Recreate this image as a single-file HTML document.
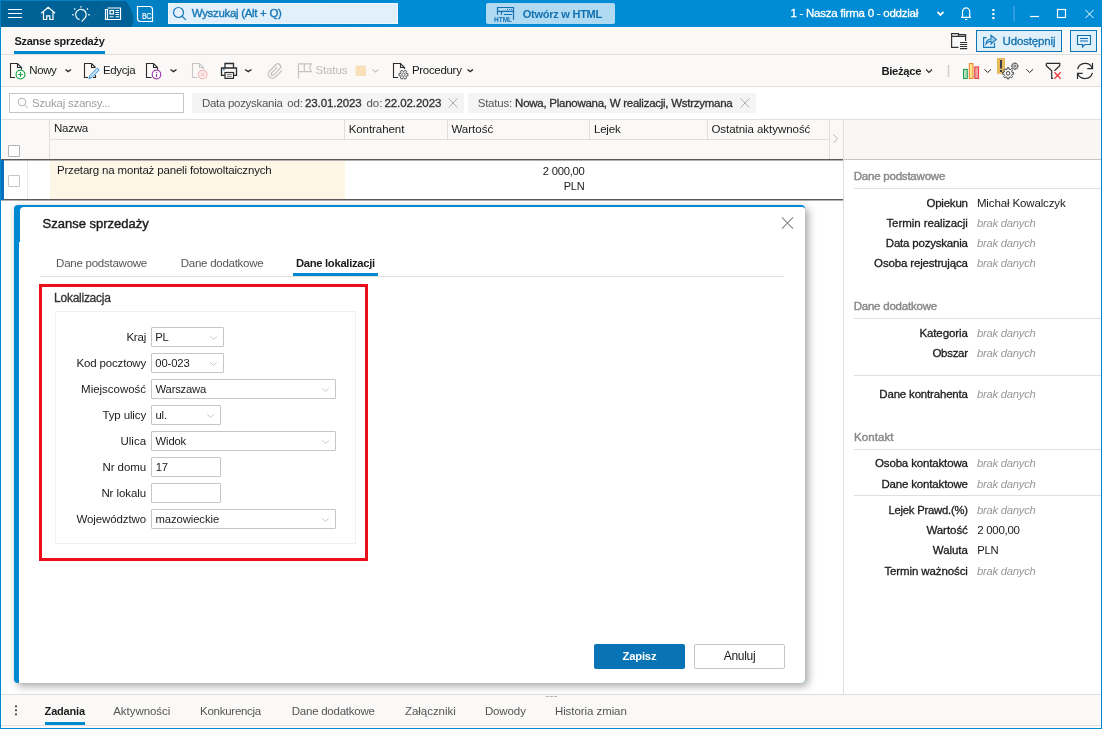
<!DOCTYPE html>
<html lang="pl">
<head>
<meta charset="utf-8">
<title>Szanse sprzedaży</title>
<style>
*{box-sizing:border-box;margin:0;padding:0}
html,body{width:1102px;height:729px;overflow:hidden;background:#fff}
body{font-family:"Liberation Sans",sans-serif;font-size:12px;color:#1b1b1b;position:relative}
.abs,.t,.b,.l,.v{position:absolute}
.t,.b,.l,.v{white-space:nowrap;line-height:14px;font-size:12px;letter-spacing:-0.3px}
.b{font-weight:bold}
.l{text-align:right}
.v.i{font-style:italic;color:#8a8a8a}
svg{position:absolute;overflow:visible}
.hl{position:absolute;height:1px;background:#e1dfdd}
.vl{position:absolute;width:1px;background:#e1dfdd}
.inp{position:absolute;height:20px;border:1px solid #c8c6c4;background:#fff;border-radius:1px}
.inp span{position:absolute;left:4px;top:3px;font-size:12px;line-height:14px;letter-spacing:-0.3px;white-space:nowrap}
.inp svg{right:5px;top:7px;width:9px;height:6px}
.cb{position:absolute;width:12px;height:12px;border:1px solid #b5b3b1;background:#fff;border-radius:1px}
</style>
</head>
<body>
<!-- TOP BAR -->
<div class="abs" id="topbar" style="left:0;top:0;width:1102px;height:27px;background:linear-gradient(90deg,#037fc4 0,#037fc4 165px,#008bd5 400px)"></div>
<svg style="left:0;top:0" width="140" height="27" viewBox="0 0 140 27"><path d="M1 1H126C130.500 8 136.500 18 131.500 27H1Z" fill="#006196"/></svg>


<!-- top icons -->
<svg style="left:0;top:0" width="170" height="27" viewBox="0 0 170 27" fill="none" stroke="#fff" stroke-width="1.2">
<path d="M8 9.5H22M8 13.5H22M8 17.5H22"/>
<path d="M41.300 13.200L48.200 7.300L55.100 13.200M43.500 11.800V19.500H46.700V15.800H49.800V19.500H53V11.800" stroke-linejoin="miter"/>
<path d="M79.500 19.700A5.300 5.300 0 1 1 84.650 18.350L81.600 21.600"/>
<path d="M80.900 6.200V7.600M74.300 8.500L75.300 9.500M87.900 8.500L86.900 9.500M72.300 14.700H73.700M88.300 14.700H89.700" stroke-width="1.400"/>
<path d="M107.500 8H120.500V19.500H105.500V9.500H107.500V19.500" />
<rect x="110" y="10.500" width="3.500" height="3.500"/>
<path d="M115.500 10.500H119M115.500 12.500H119M115.500 14.500H119M109.500 16.800H113.500M115.500 16.800H119" stroke-width="1"/>
<path d="M137.500 6.500H149.500Q152.500 6.500 152.500 9.500V21.500H140.500Q137.500 21.500 137.500 18.500Z" stroke-width="1.200"/>
</svg>
<div class="t" style="left:142px;top:10.800px;font-size:9px;line-height:10px;color:#fff;letter-spacing:0;transform:scaleX(.76);transform-origin:left center;-webkit-text-stroke:0.2px #fff;will-change:transform">BC</div>
<svg style="left:0;top:0" width="140" height="27" viewBox="0 0 140 27"><path d="M85 27L106.500 0" stroke="#2a78a6" stroke-width="0.6" fill="none" opacity=".6"/></svg>

<!-- search box -->
<div class="abs" style="left:168px;top:3px;width:230px;height:21px;background:#e1f0fa;border:1px solid #eef7fc"></div>
<svg style="left:168px;top:3px" width="26" height="21" viewBox="0 0 26 21" fill="none" stroke="#1a78b8" stroke-width="1.2"><circle cx="10.500" cy="9.500" r="5"/><path d="M14 13.200L17.900 16.900"/></svg>

<!-- open in html -->
<div class="abs" style="left:486px;top:3px;width:129px;height:21px;background:#b0d9f2;border-radius:2px"></div>
<svg style="left:486px;top:0" width="32" height="27" viewBox="486 0 32 27" fill="none" stroke="#1170b0" stroke-width="1.200"><path d="M497.500 14.800V7.500H513.500V19.800M497.500 11.300H513.500M501.500 11.300V14.800M504 14.500H512"/><path d="M507 9.400H508M509 9.400H510M511 9.400H512" stroke-width="1"/></svg>
<div class="b" style="left:493.600px;top:15.700px;font-size:6.500px;line-height:8px;color:#1170b0;letter-spacing:0;will-change:transform">HTML</div>

<!-- company -->
<svg style="left:930px;top:0" width="172" height="27" viewBox="930 0 172 27" fill="none" stroke="#fff" stroke-width="1.3">
<path d="M937.500 11.800L940.500 14.900L943.500 11.800" stroke-width="1.800"/>
<path d="M961 17.400H971M962.500 17.400V12A3.600 4.100 0 0 1 969.700 12V17.400M966.100 7.200V8.200M965 19.500H967.200" stroke-width="1.200"/>
<g fill="#fff" stroke="none"><rect x="992.300" y="9" width="2.200" height="2.100"/><rect x="992.300" y="13" width="2.200" height="2.100"/><rect x="992.300" y="17" width="2.200" height="2.100"/></g>
<path d="M1014 6V21.500" stroke="#2e9cde" stroke-width="2"/>
<path d="M1030 16.500H1039" stroke-width="1.200"/>
<rect x="1057.500" y="9.500" width="8" height="8" stroke-width="1.200"/>
<path d="M1085.500 10L1093.500 18M1093.500 10L1085.500 18" stroke-width="1"/>
</svg>

<!-- window frame -->
<div class="abs" style="left:0;top:27px;width:1px;height:702px;background:#0089d3"></div>
<div class="abs" style="left:1101px;top:27px;width:1px;height:702px;background:#0089d3"></div>
<div class="abs" style="left:0;top:728px;width:1102px;height:1px;background:#0089d3"></div>

<!-- TAB ROW -->
<div class="abs" style="left:1px;top:27px;width:1100px;height:27px;background:#faf9f8"></div>
<div class="hl" style="left:1px;top:54px;width:1100px"></div>
<div class="abs" style="left:14px;top:51px;width:91px;height:3px;background:#0089d3"></div>


<!-- row2 right -->
<svg style="left:948px;top:30px" width="24" height="22" viewBox="948 30 24 22" fill="none" stroke="#333" stroke-width="1.200">
<path d="M958.500 47.300H951.600V33.700H958.500V36.300M951.600 36.300H965.600M958.500 34.700H965.600V41"/>
<path d="M960 42.500H967.200M960 44.500H967.200M960 46.500H967.200M960 48.600H967.200" stroke-width="1.100"/>
</svg>
<div class="abs" style="left:976px;top:30px;width:86px;height:22px;background:#e0f0fa;border:1px solid #0a76b6"></div>
<svg style="left:980px;top:32px" width="20" height="18" viewBox="980 32 20 18" fill="none" stroke="#1a78b4" stroke-width="1.200">
<path d="M986.500 37.700H983.600V47.300H994.500V43"/>
<path d="M986 44Q986.300 39.200 991 39V35.200L996.300 39.600L991 44V41.200Q988 41.200 986 44Z" stroke-width="1.100" fill="#9ccbe8"/>
</svg>
<div class="abs" style="left:1070px;top:30px;width:27px;height:22px;background:#e0f0fa;border:1px solid #0a76b6"></div>
<svg style="left:1070px;top:30px" width="28" height="22" viewBox="1070 30 28 22" fill="none" stroke="#1170b0" stroke-width="1.100">
<path d="M1077.500 35.500H1090.500V44.500H1085L1082.500 47V44.500H1077.500Z"/>
<path d="M1080 38.500H1088M1080 41H1088" stroke-width="1"/>
</svg>

<!-- TOOLBAR -->
<div class="abs" style="left:1px;top:55px;width:1100px;height:31px;background:#faf9f8"></div>
<div class="hl" style="left:1px;top:86px;width:1100px"></div>


<!-- toolbar icons -->
<svg style="left:0;top:55px" width="500" height="31" viewBox="0 55 500 31" fill="none" stroke="#2b2b2b" stroke-width="1.100">
<!-- Nowy -->
<path d="M15 77.500H10.500V63.500H17.500L21.500 67.500V69.500M17.500 63.500V67.500H21.500"/>
<circle cx="20.500" cy="74.500" r="4.400" stroke="#1fa84a" stroke-width="1.200" fill="#fff"/><path d="M18 74.500H23M20.500 72V77" stroke="#1fa84a" stroke-width="1.100"/>
<path d="M65.500 69.500L68.200 71.600L71 69.500" stroke-width="1.400"/>
<!-- Edycja -->
<path d="M88 77.500H84.500V63.500H91.500L95.500 67.500M91.500 63.500V67.500H95.500M93 77.500H95.500V75"/>
<path d="M89 78.800L90 75.400L97.300 68.100L99.200 70L92 77.300Z" stroke="#2b8ad6" fill="#cfe6f8" stroke-width="1"/>
<!-- doc info -->
<path d="M151.500 77.500H146.500V63.500H153.500L157.500 67.500V69.500M153.500 63.500V67.500H157.500"/>
<circle cx="156.500" cy="74.500" r="4.300" stroke="#a040b0" stroke-width="1.200" fill="#fff"/><path d="M156.500 74V77M156.500 72V73" stroke="#a040b0" stroke-width="1.200"/>
<path d="M170.500 69.500L173.500 71.600L176.500 69.500" stroke-width="1.400"/>
<!-- doc delete disabled -->
<path d="M197.500 77.500H192.500V63.500H199.500L203.500 67.500V69.500M199.500 63.500V67.500H203.500" stroke="#c8c6c4"/>
<circle cx="202.700" cy="74.500" r="4.300" stroke="#f3b5b5" fill="#fdeeee"/><path d="M201 72.800L204.400 76.200M204.400 72.800L201 76.200" stroke="#f3b5b5" stroke-width="1"/>
<!-- printer -->
<path d="M225 68V63.500H233.500V68M225 75.300H221.500V68H236.500V75.300H233.500" stroke-width="1.300"/>
<rect x="225" y="72.500" width="8.500" height="5.900" stroke-width="1.200" fill="#fff"/>
<path d="M226.800 74.600H231.700M226.800 76.400H231.700" stroke-width="0.800" stroke="#555"/>
<path d="M223 69.700H224.800" stroke="#2b8ad6" stroke-width="1.200"/>
<path d="M245 69.500L248.300 71.600L251.500 69.500" stroke-width="1.400"/>
<!-- paperclip disabled -->
<path transform="translate(266.800 62.900) scale(0.700)" d="M21.440 11.050l-9.190 9.190a6 6 0 0 1-8.490-8.490l9.190-9.190a4 4 0 0 1 5.660 5.660l-9.200 9.190a2 2 0 0 1-2.830-2.830l8.490-8.480" stroke="#c2c0be" stroke-width="1.800"/>
<!-- flag disabled -->
<path d="M298.500 63.200V78.500M298.500 63.800H311.300L309.500 67.700L311.300 71.600H298.500M304.300 63.800V71.600" stroke="#c6c4c2" stroke-width="1.200"/>
<rect x="355.500" y="65.500" width="10.500" height="10.500" rx="1" fill="#f9e0b8" stroke="none"/>
<path d="M372.500 69.500L375.500 72L378.500 69.500" stroke="#c8c6c4" stroke-width="1.200"/>
<!-- procedury -->
<path d="M398 77.500H393.500V63.500H400.500L404.500 67.500V69M400.500 63.500V67.500H404.500"/>
<path d="M406.25 73.51L407.96 73.56L407.96 75.84L406.25 75.89L405.91 76.49L406.72 77.99L404.74 79.13L403.84 77.68L403.16 77.68L402.26 79.13L400.28 77.99L401.09 76.49L400.75 75.89L399.04 75.84L399.04 73.56L400.75 73.51L401.09 72.91L400.28 71.41L402.26 70.27L403.16 71.72L403.84 71.72L404.74 70.27L406.72 71.41L405.91 72.91Z" stroke="#555" stroke-width="1" fill="#faf9f8"/><circle cx="403.500" cy="74.700" r="1.600" stroke="#555" stroke-width="0.900"/>
<path d="M467.500 69.500L470.200 71.600L473 69.500" stroke-width="1.400"/>
</svg>
<svg style="left:900px;top:55px" width="202" height="31" viewBox="900 55 202 31" fill="none" stroke="#2b2b2b" stroke-width="1.100">
<path d="M926 69.500L929 72.500L932 69.500" stroke-width="1.100"/>
<path d="M948.500 65V77" stroke="#d2d0ce" stroke-width="1.500"/>
<rect x="963.500" y="69.400" width="3.800" height="9" fill="#b5dfc0" stroke="#12a14a" stroke-width="1"/>
<rect x="969.300" y="63.600" width="3.700" height="14.800" fill="#fbe58e" stroke="#ef7f22" stroke-width="1"/>
<rect x="974.800" y="66.900" width="3.800" height="11.500" fill="#f2a3a3" stroke="#e8343a" stroke-width="1"/>
<path d="M984.500 69.300L987.700 72.500L991 69.300" stroke-width="1"/>
<rect x="997" y="58" width="8" height="15.800" fill="#e6b95c" stroke="none"/>
<path d="M1001 60V68.600M1001 70V71.900" stroke="#1f2a44" stroke-width="1.700"/>
<path d="M1012.07 72.26L1013.63 72.42L1013.63 74.18L1012.07 74.34L1011.64 75.37L1012.63 76.59L1011.39 77.83L1010.17 76.84L1009.14 77.27L1008.98 78.83L1007.22 78.83L1007.06 77.27L1006.03 76.84L1004.81 77.83L1003.57 76.59L1004.56 75.37L1004.13 74.34L1002.57 74.18L1002.57 72.42L1004.13 72.26L1004.56 71.23L1003.57 70.01L1004.81 68.77L1006.03 69.76L1007.06 69.33L1007.22 67.77L1008.98 67.77L1009.14 69.33L1010.17 69.76L1011.39 68.77L1012.63 70.01L1011.64 71.23Z" stroke="#444" stroke-width="1" fill="#faf9f8"/><circle cx="1008.100" cy="73.300" r="1.800" stroke="#444" stroke-width="1"/>
<path d="M1017.12 65.59L1018.16 65.67L1018.16 66.73L1017.12 66.81L1016.87 67.41L1017.55 68.20L1016.80 68.95L1016.01 68.27L1015.41 68.52L1015.33 69.56L1014.27 69.56L1014.19 68.52L1013.59 68.27L1012.80 68.95L1012.05 68.20L1012.73 67.41L1012.48 66.81L1011.44 66.73L1011.44 65.67L1012.48 65.59L1012.73 64.99L1012.05 64.20L1012.80 63.45L1013.59 64.13L1014.19 63.88L1014.27 62.84L1015.33 62.84L1015.41 63.88L1016.01 64.13L1016.80 63.45L1017.55 64.20L1016.87 64.99Z" stroke="#444" stroke-width="0.900" fill="#faf9f8"/><circle cx="1014.800" cy="66.200" r="1" stroke="#444" stroke-width="0.800"/>
<path d="M1026.300 69.300L1029.600 72.500L1033 69.300" stroke-width="1"/>
<path d="M1046.300 63.400H1059.700V65.700L1054.500 70.700M1046.300 63.400V65.700L1051.700 70.700V78.300H1053.200" stroke-width="1.200"/>
<path d="M1054.500 72.300L1060.700 78.700M1060.700 72.300L1054.500 78.700" stroke="#ee3a3f" stroke-width="1.300"/>
<path d="M1077.600 69A7.800 7.800 0 0 1 1092.300 68.300M1092.500 63V68.600H1087.300M1092.400 72.800A7.800 7.800 0 0 1 1077.700 73.800M1077.500 79V73.400H1082.700" stroke-width="1.200"/>
</svg>

<!-- FILTER ROW -->
<div class="abs" style="left:1px;top:87px;width:1100px;height:32px;background:#fff"></div>
<div class="hl" style="left:1px;top:119px;width:1100px"></div>


<!-- filter row items -->
<div class="abs" style="left:9px;top:93px;width:175px;height:20px;background:#fff;border:1px solid #c8c6c4"></div>
<svg style="left:14px;top:95px" width="16" height="16" viewBox="14 95 16 16" fill="none" stroke="#b5b3b1" stroke-width="1"><circle cx="22" cy="102" r="3.800"/><path d="M24.800 105L27.500 108"/></svg>
<div class="abs" style="left:192px;top:93px;width:272px;height:20px;background:#f4f4f4;border-radius:2px"></div>
<div class="abs" style="left:468px;top:93px;width:288px;height:20px;background:#f4f4f4;border-radius:2px"></div>
<svg style="left:440px;top:93px" width="320" height="20" viewBox="440 93 320 20" fill="none" stroke="#a8a6a4" stroke-width="0.900">
<path d="M448.700 98.500L457.300 107.500M457.300 98.500L448.700 107.500"/>
<path d="M740.700 98.500L749.300 107.500M749.300 98.500L740.700 107.500"/>
</svg>

<!-- GRID -->
<div class="abs" id="gridhead" style="left:1px;top:120px;width:842px;height:39px;background:#faf9f8"></div>


<!-- grid lines -->
<div class="hl" style="left:50px;top:139px;width:779px"></div>
<div class="vl" style="left:49px;top:120px;height:39px"></div>
<div class="vl" style="left:344px;top:120px;height:19px"></div>
<div class="vl" style="left:447px;top:120px;height:19px"></div>
<div class="vl" style="left:589px;top:120px;height:19px"></div>
<div class="vl" style="left:707px;top:120px;height:19px"></div>
<div class="vl" style="left:829px;top:120px;height:39px"></div>
<svg style="left:830px;top:130px" width="12" height="16" viewBox="830 130 12 16" fill="none" stroke="#b5b3b1" stroke-width="1"><path d="M833.500 134.500L837.500 138.700L833.500 143"/></svg>
<div class="cb" style="left:8px;top:145px"></div>
<!-- row -->
<div class="abs" style="left:1px;top:159px;width:843px;height:42px;background:#fff"></div>
<div class="abs" style="left:50px;top:160px;width:295px;height:39px;background:#fdf5e6"></div>
<div class="vl" style="left:27px;top:160px;height:39px;background:#edebe9"></div>
<div class="abs" style="left:1px;top:159px;width:843px;height:1px;background:#5a5a5a"></div>
<div class="abs" style="left:1px;top:160px;width:843px;height:1px;background:#b0b0b0"></div>
<div class="abs" style="left:1px;top:199px;width:843px;height:1px;background:#5a5a5a"></div>
<div class="abs" style="left:1px;top:200px;width:843px;height:1px;background:#b0b0b0"></div>
<div class="abs" style="left:1px;top:160px;width:3px;height:40px;background:#0870b8"></div>
<div class="cb" style="left:8px;top:175px;border-color:#c8c6c4"></div>

<!-- RIGHT PANEL -->
<div class="abs" style="left:843px;top:120px;width:258px;height:39px;background:#f8f7f6"></div>
<div class="vl" style="left:843px;top:120px;height:574px"></div>


<!-- right panel -->
<div class="abs" style="left:844px;top:159px;width:257px;height:1px;background:#c8c6c4"></div>
<div class="hl" style="left:854px;top:188px;width:247px"></div>
<div class="hl" style="left:854px;top:318px;width:247px"></div>
<div class="hl" style="left:854px;top:375px;width:247px"></div>
<div class="hl" style="left:854px;top:449px;width:247px"></div>
<div class="hl" style="left:854px;top:495px;width:247px"></div>

<!-- BOTTOM TABS -->
<div class="abs" style="left:1px;top:695px;width:1100px;height:33px;background:#faf9f8"></div>
<div class="hl" style="left:1px;top:725px;width:1100px"></div>
<div class="hl" style="left:1px;top:694px;width:1100px"></div>

<svg style="left:10px;top:700px" width="12" height="20" viewBox="10 700 12 20" fill="#444"><circle cx="16" cy="706.300" r="1.100"/><circle cx="16" cy="710.300" r="1.100"/><circle cx="16" cy="714.300" r="1.100"/></svg>
<div class="abs" style="left:45px;top:722px;width:40px;height:3px;background:#0089d3"></div>
<div class="abs" style="left:546px;top:696px;width:11px;height:1px;background:repeating-linear-gradient(90deg,#b5b3b1 0 3px,transparent 3px 4px)"></div>

<!-- MODAL -->
<!-- modal -->
<div class="abs" style="left:13.500px;top:205px;width:791.500px;height:478px;background:#0089d3;border-radius:4px 4px 4px 4px;box-shadow:3px 3px 8px rgba(0,0,0,.36)"></div>
<div class="abs" style="left:20px;top:207px;width:785px;height:36px;background:#fff;border-radius:4px 3px 0 0"></div>
<div class="abs" style="left:19px;top:242px;width:786px;height:441px;background:#fff;border-radius:0 0 4px 0"></div>
<svg style="left:780px;top:216px" width="14" height="14" viewBox="0 0 14 14" fill="none" stroke="#8a8886" stroke-width="1.100"><path d="M2 1.300L13 12.700M13 1.300L2 12.700"/></svg>
<div class="hl" style="left:40px;top:276px;width:744px"></div>
<div class="abs" style="left:293px;top:273px;width:85px;height:3px;background:#0089d3"></div>
<div class="abs" style="left:55px;top:311px;width:301px;height:233px;border:1px solid #f1f0ef;background:#fff"></div>
<div class="abs" style="left:39px;top:284px;width:329px;height:277px;border:3px solid #ec0f1a"></div>
<div class="inp" style="left:151px;top:327px;width:73px"><svg viewBox="0 0 9 6" fill="none" stroke="#c2c0be" stroke-width="0.900"><path d="M1.300 1.500L4.500 4.500L7.700 1.500"/></svg></div>
<div class="inp" style="left:151px;top:353px;width:73px"><svg viewBox="0 0 9 6" fill="none" stroke="#c2c0be" stroke-width="0.900"><path d="M1.300 1.500L4.500 4.500L7.700 1.500"/></svg></div>
<div class="inp" style="left:151px;top:379px;width:185px"><svg viewBox="0 0 9 6" fill="none" stroke="#c2c0be" stroke-width="0.900"><path d="M1.300 1.500L4.500 4.500L7.700 1.500"/></svg></div>
<div class="inp" style="left:151px;top:405px;width:70px"><svg viewBox="0 0 9 6" fill="none" stroke="#c2c0be" stroke-width="0.900"><path d="M1.300 1.500L4.500 4.500L7.700 1.500"/></svg></div>
<div class="inp" style="left:151px;top:431px;width:185px"><svg viewBox="0 0 9 6" fill="none" stroke="#c2c0be" stroke-width="0.900"><path d="M1.300 1.500L4.500 4.500L7.700 1.500"/></svg></div>
<div class="inp" style="left:151px;top:457px;width:70px"></div>
<div class="inp" style="left:151px;top:483px;width:70px"></div>
<div class="inp" style="left:151px;top:509px;width:185px"><svg viewBox="0 0 9 6" fill="none" stroke="#c2c0be" stroke-width="0.900"><path d="M1.300 1.500L4.500 4.500L7.700 1.500"/></svg></div>
<div class="abs" style="left:594px;top:644px;width:91px;height:25px;background:#0873b5;border-radius:2px"></div>
<div class="abs" style="left:694px;top:644px;width:91px;height:25px;background:#fff;border:1px solid #c8c6c4;border-radius:2px"></div>


<div id="txt" style="position:absolute;left:0;top:0;width:1102px;height:729px;will-change:transform">
<div class="t" style="left:191.7px;top:6px;font-size:11.5px;color:#1a78b8;-webkit-text-stroke:0.4px #1a78b8;letter-spacing:-0.308px;">Wyszukaj (Alt + Q)</div>
<div class="t" style="left:522.8px;top:7px;font-size:11px;color:#1170b0;font-weight:bold;letter-spacing:-0.254px;">Otwórz w HTML</div>
<div class="t" style="left:790.4px;top:6px;font-size:11.5px;color:#ffffff;-webkit-text-stroke:0.3px #ffffff;letter-spacing:-0.245px;">1 - Nasza firma 0 - oddział</div>
<div class="t" style="left:14.4px;top:34px;font-size:11px;color:#1b1b1b;font-weight:bold;letter-spacing:-0.247px;">Szanse sprzedaży</div>
<div class="t" style="left:1002.6px;top:34px;font-size:11.5px;color:#1170b0;-webkit-text-stroke:0.3px #1170b0;letter-spacing:-0.164px;">Udostępnij</div>
<div class="t" style="left:29.2px;top:63px;font-size:11.5px;color:#1b1b1b;letter-spacing:-0.366px;">Nowy</div>
<div class="t" style="left:102.9px;top:63px;font-size:11.5px;color:#1b1b1b;letter-spacing:-0.355px;">Edycja</div>
<div class="t" style="left:315.4px;top:63px;font-size:11.5px;color:#bdbbb9;letter-spacing:-0.102px;">Status</div>
<div class="t" style="left:411.9px;top:63px;font-size:11.5px;color:#1b1b1b;letter-spacing:-0.302px;">Procedury</div>
<div class="t" style="left:881.4px;top:64px;font-size:11.25px;color:#1b1b1b;font-weight:bold;letter-spacing:-0.301px;">Bieżące</div>
<div class="t" style="left:31.9px;top:96px;font-size:11.5px;color:#a19f9d;letter-spacing:-0.241px;">Szukaj szansy...</div>
<div class="t" style="left:201.9px;top:96px;font-size:11.5px;color:#555;letter-spacing:-0.289px;">Data pozyskania</div>
<div class="t" style="left:287.2px;top:96px;font-size:11.5px;color:#555;letter-spacing:-0.100px;">od:</div>
<div class="t" style="left:305.0px;top:96px;font-size:11.5px;color:#303030;-webkit-text-stroke:0.3px #303030;letter-spacing:-0.096px;">23.01.2023</div>
<div class="t" style="left:366.4px;top:96px;font-size:11.5px;color:#555;letter-spacing:0.000px;">do:</div>
<div class="t" style="left:384.4px;top:96px;font-size:11.5px;color:#303030;-webkit-text-stroke:0.3px #303030;letter-spacing:-0.066px;">22.02.2023</div>
<div class="t" style="left:477.7px;top:96px;font-size:11.5px;color:#555;letter-spacing:-0.216px;">Status:</div>
<div class="t" style="left:515.1px;top:96px;font-size:11.5px;color:#303030;-webkit-text-stroke:0.3px #303030;letter-spacing:-0.263px;">Nowa, Planowana, W realizacji, Wstrzymana</div>
<div class="t" style="left:54.0px;top:121px;font-size:11.5px;color:#1b1b1b;letter-spacing:-0.251px;">Nazwa</div>
<div class="t" style="left:348.7px;top:122px;font-size:11.5px;color:#1b1b1b;letter-spacing:-0.067px;">Kontrahent</div>
<div class="t" style="left:451.4px;top:122px;font-size:11.5px;color:#1b1b1b;letter-spacing:0.007px;">Wartość</div>
<div class="t" style="left:593.9px;top:122px;font-size:11.5px;color:#1b1b1b;letter-spacing:-0.160px;">Lejek</div>
<div class="t" style="left:711.4px;top:122px;font-size:11.5px;color:#1b1b1b;letter-spacing:-0.045px;">Ostatnia aktywność</div>
<div class="t" style="left:56.9px;top:163px;font-size:11.5px;color:#1b1b1b;letter-spacing:-0.170px;">Przetarg na montaż paneli fotowoltaicznych</div>
<div class="t" style="left:542.8px;top:164px;font-size:11.25px;color:#1b1b1b;letter-spacing:-0.249px;">2 000,00</div>
<div class="t" style="left:563.7px;top:179px;font-size:11.0px;color:#1b1b1b;letter-spacing:-0.167px;">PLN</div>
<div class="t" style="left:42.6px;top:217px;font-size:13px;color:#1b1b1b;-webkit-text-stroke:0.4px #1b1b1b;letter-spacing:-0.002px;">Szanse sprzedaży</div>
<div class="t" style="left:56.1px;top:256px;font-size:11.5px;color:#555;letter-spacing:-0.248px;">Dane podstawowe</div>
<div class="t" style="left:180.8px;top:256px;font-size:11.5px;color:#555;letter-spacing:-0.265px;">Dane dodatkowe</div>
<div class="t" style="left:295.9px;top:256px;font-size:11.25px;color:#1b1b1b;font-weight:bold;letter-spacing:-0.300px;">Dane lokalizacji</div>
<div class="t" style="left:54.1px;top:291px;font-size:12px;color:#333;-webkit-text-stroke:0.3px #333;letter-spacing:-0.261px;">Lokalizacja</div>
<div class="t" style="left:126.4px;top:330px;font-size:11.5px;color:#1b1b1b;letter-spacing:-0.188px;">Kraj</div>
<div class="t" style="left:76.6px;top:356px;font-size:11.5px;color:#1b1b1b;letter-spacing:-0.176px;">Kod pocztowy</div>
<div class="t" style="left:81.1px;top:382px;font-size:11.5px;color:#1b1b1b;letter-spacing:-0.017px;">Miejscowość</div>
<div class="t" style="left:102.4px;top:408px;font-size:11.5px;color:#1b1b1b;letter-spacing:-0.117px;">Typ ulicy</div>
<div class="t" style="left:120.4px;top:434px;font-size:11.5px;color:#1b1b1b;letter-spacing:0.027px;">Ulica</div>
<div class="t" style="left:102.4px;top:460px;font-size:11.5px;color:#1b1b1b;letter-spacing:-0.058px;">Nr domu</div>
<div class="t" style="left:101.4px;top:486px;font-size:11.5px;color:#1b1b1b;letter-spacing:-0.077px;">Nr lokalu</div>
<div class="t" style="left:76.4px;top:512px;font-size:11.5px;color:#1b1b1b;letter-spacing:-0.095px;">Województwo</div>
<div class="t" style="left:155.3px;top:330px;font-size:11.25px;color:#1b1b1b;letter-spacing:-0.333px;">PL</div>
<div class="t" style="left:155.3px;top:356px;font-size:11.25px;color:#1b1b1b;letter-spacing:-0.122px;">00-023</div>
<div class="t" style="left:155.6px;top:382px;font-size:11.25px;color:#1b1b1b;letter-spacing:-0.212px;">Warszawa</div>
<div class="t" style="left:155.4px;top:408px;font-size:11.25px;color:#1b1b1b;letter-spacing:-0.064px;">ul.</div>
<div class="t" style="left:155.6px;top:434px;font-size:11.25px;color:#1b1b1b;letter-spacing:-0.153px;">Widok</div>
<div class="t" style="left:155.7px;top:460px;font-size:11.25px;color:#1b1b1b;letter-spacing:-0.208px;">17</div>
<div class="t" style="left:155.4px;top:512px;font-size:11.25px;color:#1b1b1b;letter-spacing:-0.064px;">mazowieckie</div>
<div class="t" style="left:622.6px;top:649px;font-size:11.25px;color:#fff;font-weight:bold;letter-spacing:-0.218px;">Zapisz</div>
<div class="t" style="left:723.7px;top:649px;font-size:12px;color:#1b1b1b;letter-spacing:-0.277px;">Anuluj</div>
<div class="t" style="left:44.6px;top:704px;font-size:11px;color:#1b1b1b;font-weight:bold;letter-spacing:-0.183px;">Zadania</div>
<div class="t" style="left:113.2px;top:704px;font-size:11.5px;color:#555;letter-spacing:-0.043px;">Aktywności</div>
<div class="t" style="left:200.1px;top:704px;font-size:11.5px;color:#555;letter-spacing:-0.276px;">Konkurencja</div>
<div class="t" style="left:291.8px;top:704px;font-size:11.5px;color:#555;letter-spacing:-0.251px;">Dane dodatkowe</div>
<div class="t" style="left:404.9px;top:704px;font-size:11.5px;color:#555;letter-spacing:-0.024px;">Załączniki</div>
<div class="t" style="left:484.9px;top:704px;font-size:11.5px;color:#555;letter-spacing:-0.110px;">Dowody</div>
<div class="t" style="left:554.9px;top:704px;font-size:11.5px;color:#555;letter-spacing:-0.069px;">Historia zmian</div>
<div class="t" style="left:853.7px;top:169px;font-size:11.5px;color:#8a8886;-webkit-text-stroke:0.4px #8a8886;letter-spacing:-0.215px;">Dane podstawowe</div>
<div class="t" style="left:926.4px;top:196px;font-size:11.5px;color:#1b1b1b;-webkit-text-stroke:0.3px #1b1b1b;letter-spacing:-0.206px;">Opiekun</div>
<div class="t" style="left:886.4px;top:216px;font-size:11.5px;color:#1b1b1b;-webkit-text-stroke:0.3px #1b1b1b;letter-spacing:-0.061px;">Termin realizacji</div>
<div class="t" style="left:885.8px;top:236px;font-size:11.5px;color:#1b1b1b;-webkit-text-stroke:0.3px #1b1b1b;letter-spacing:-0.202px;">Data pozyskania</div>
<div class="t" style="left:874.1px;top:256px;font-size:11.5px;color:#1b1b1b;-webkit-text-stroke:0.3px #1b1b1b;letter-spacing:-0.157px;">Osoba rejestrująca</div>
<div class="t" style="left:976.9px;top:196px;font-size:11.5px;color:#1b1b1b;letter-spacing:-0.128px;">Michał Kowalczyk</div>
<div class="t" style="left:976.9px;top:216px;font-size:11.25px;color:#9a9896;font-style:italic;letter-spacing:-0.236px;">brak danych</div>
<div class="t" style="left:976.9px;top:236px;font-size:11.25px;color:#9a9896;font-style:italic;letter-spacing:-0.236px;">brak danych</div>
<div class="t" style="left:976.9px;top:256px;font-size:11.25px;color:#9a9896;font-style:italic;letter-spacing:-0.236px;">brak danych</div>
<div class="t" style="left:853.7px;top:299px;font-size:11.5px;color:#8a8886;-webkit-text-stroke:0.4px #8a8886;letter-spacing:-0.222px;">Dane dodatkowe</div>
<div class="t" style="left:919.4px;top:326px;font-size:11.5px;color:#1b1b1b;-webkit-text-stroke:0.3px #1b1b1b;letter-spacing:-0.093px;">Kategoria</div>
<div class="t" style="left:932.4px;top:346px;font-size:11.5px;color:#1b1b1b;-webkit-text-stroke:0.3px #1b1b1b;letter-spacing:-0.280px;">Obszar</div>
<div class="t" style="left:976.9px;top:326px;font-size:11.25px;color:#9a9896;font-style:italic;letter-spacing:-0.236px;">brak danych</div>
<div class="t" style="left:976.9px;top:346px;font-size:11.25px;color:#9a9896;font-style:italic;letter-spacing:-0.236px;">brak danych</div>
<div class="t" style="left:879.3px;top:387px;font-size:11.5px;color:#1b1b1b;-webkit-text-stroke:0.3px #1b1b1b;letter-spacing:-0.184px;">Dane kontrahenta</div>
<div class="t" style="left:976.9px;top:387px;font-size:11.25px;color:#9a9896;font-style:italic;letter-spacing:-0.236px;">brak danych</div>
<div class="t" style="left:854.0px;top:430px;font-size:11.5px;color:#8a8886;-webkit-text-stroke:0.4px #8a8886;letter-spacing:0.071px;">Kontakt</div>
<div class="t" style="left:875.0px;top:456px;font-size:11.5px;color:#1b1b1b;-webkit-text-stroke:0.3px #1b1b1b;letter-spacing:-0.154px;">Osoba kontaktowa</div>
<div class="t" style="left:881.4px;top:477px;font-size:11.5px;color:#1b1b1b;-webkit-text-stroke:0.3px #1b1b1b;letter-spacing:-0.165px;">Dane kontaktowe</div>
<div class="t" style="left:976.9px;top:456px;font-size:11.25px;color:#9a9896;font-style:italic;letter-spacing:-0.236px;">brak danych</div>
<div class="t" style="left:976.9px;top:477px;font-size:11.25px;color:#9a9896;font-style:italic;letter-spacing:-0.236px;">brak danych</div>
<div class="t" style="left:888.4px;top:503px;font-size:11.25px;color:#1b1b1b;-webkit-text-stroke:0.3px #1b1b1b;letter-spacing:-0.209px;">Lejek Prawd.(%)</div>
<div class="t" style="left:926.4px;top:523px;font-size:11.5px;color:#1b1b1b;-webkit-text-stroke:0.3px #1b1b1b;letter-spacing:-0.050px;">Wartość</div>
<div class="t" style="left:932.8px;top:543px;font-size:11.5px;color:#1b1b1b;-webkit-text-stroke:0.3px #1b1b1b;letter-spacing:-0.062px;">Waluta</div>
<div class="t" style="left:884.4px;top:564px;font-size:11.5px;color:#1b1b1b;-webkit-text-stroke:0.3px #1b1b1b;letter-spacing:-0.107px;">Termin ważności</div>
<div class="t" style="left:976.9px;top:503px;font-size:11.25px;color:#9a9896;font-style:italic;letter-spacing:-0.236px;">brak danych</div>
<div class="t" style="left:977.2px;top:523px;font-size:11.5px;color:#1b1b1b;letter-spacing:-0.296px;">2 000,00</div>
<div class="t" style="left:977.2px;top:543px;font-size:11.25px;color:#1b1b1b;letter-spacing:-0.163px;">PLN</div>
<div class="t" style="left:976.9px;top:564px;font-size:11.25px;color:#9a9896;font-style:italic;letter-spacing:-0.236px;">brak danych</div>
</div>
</body>
</html>
